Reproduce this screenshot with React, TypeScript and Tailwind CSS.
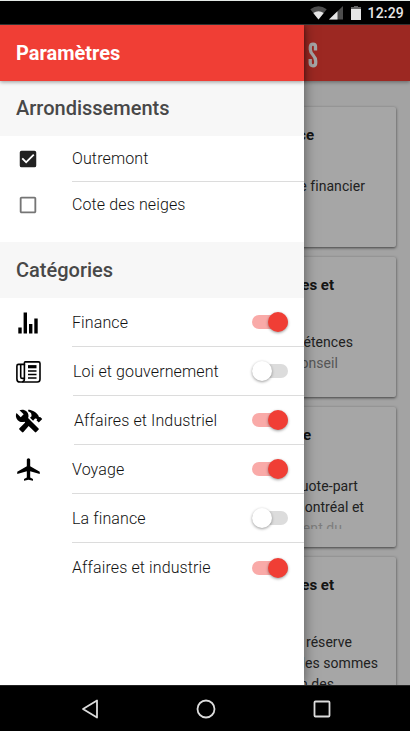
import { useState, type ReactNode } from 'react';
import { IoMdConstruct } from 'react-icons/io';
import { MdCheckBox, MdCheckBoxOutlineBlank, MdLocalAirport } from 'react-icons/md';

type Line = { text: string; end: string; tone?: string };

type Article = { title: Line; gap: string; lines: Line[] };

const ARTICLES: Article[] = [
  {
    title: { text: 'ce', end: 'w-[302px]' },
    gap: 'mt-[31px]',
    lines: [{ text: 'e financier', end: 'w-[353px]' }],
  },
  {
    title: { text: 'es et', end: 'w-[322px]' },
    gap: 'mt-[37px]',
    lines: [
      { text: 'pétences', end: 'w-[341px]' },
      { text: 'conseil', end: 'w-[326px]', tone: 'opacity-60' },
    ],
  },
  {
    title: { text: 'e', end: 'w-[299px]' },
    gap: 'mt-[31px]',
    lines: [
      { text: 'quote-part', end: 'w-[346px]' },
      { text: 'Montréal et', end: 'w-[352px]' },
      {
        text: 'ment du',
        end: 'w-[330px]',
        tone: 'h-[11px] overflow-hidden opacity-30',
      },
    ],
  },
  {
    title: { text: 'es et', end: 'w-[322px]' },
    gap: 'mt-[37px]',
    lines: [
      { text: 'réserve', end: 'w-[340px]' },
      { text: 'les sommes', end: 'w-[366px]' },
      { text: 'n des', end: 'w-[322px]' },
    ],
  },
];

const DISTRICTS = [
  { name: 'Outremont', checked: true },
  { name: 'Cote des neiges', checked: false },
];

function StatsIcon() {
  return (
    <svg width="20" height="22" viewBox="0 0 20 22" className="ml-0.5">
      <path d="M.300 15.500h3.400V21.500H.300zM5.600.500H9v21H5.600zM11 12h3.400v9.500H11zM16.300 6.500h3.400v15h-3.400z" />
    </svg>
  );
}

function NewsIcon() {
  return (
    <svg width="25" height="22" viewBox="0 0 25 22" fill="none" stroke="#000" strokeWidth="1.600">
      <path d="M9.300.900H22.500q1.500 0 1.500 1.500V18.300q0 2.700-2.700 2.700H4q-3.100 0-3.100-3.100V4.900q0-1.500 1.500-1.500h6V1.800q0-.900.900-.900z" />
      <path d="M8.400 3.400v14.400q0 3-2.300 3M4.700 3.400v12.300q0 1.700 1.600 1.700h2" />
      <path d="M12 5.700h8.500" strokeWidth="3.200" />
      <path d="M12 10h8.500M12 13.500h8.500M12 17h8.500" />
    </svg>
  );
}

type Category = {
  name: string;
  icon?: ReactNode;
  on: boolean;
  indent: string;
};

const CATEGORIES: Category[] = [
  { name: 'Finance', icon: <StatsIcon />, on: true, indent: '' },
  { name: 'Loi et gouvernement', icon: <NewsIcon />, on: false, indent: 'ml-px' },
  {
    name: 'Affaires et Industriel',
    icon: <IoMdConstruct size={28} className="-ml-px" />,
    on: true,
    indent: 'ml-0.5',
  },
  { name: 'Voyage', icon: <MdLocalAirport size={27} className="-ml-px" />, on: true, indent: '' },
  { name: 'La finance', on: false, indent: '' },
  { name: 'Affaires et industrie', on: true, indent: '' },
];

function Switch({ on, onClick }: { on: boolean; onClick: () => void }) {
  return (
    <button
      role="switch"
      aria-checked={on}
      onClick={onClick}
      className={`flex h-3.5 w-9 items-center rounded-full ${
        on ? 'justify-end bg-[#f9aaa8]' : 'bg-[#dcdcdc]'
      }`}
    >
      <span
        className={`size-5 rounded-full shadow-[0_1px_3px_rgba(0,0,0,0.4)] ${
          on ? 'bg-[#f03e35]' : 'bg-white'
        }`}
      />
    </button>
  );
}

function StatusBar() {
  return (
    <div className="flex h-[25px] shrink-0 items-center justify-end border-t border-b border-t-[#e4e9e6] border-b-[#333] bg-black pr-[6px] text-[#e6e6e6]">
      <svg width="17" height="14" viewBox="0 0 17 14" className="mr-[2px]">
        <path d="M8.500 13.500.3 3.200Q8.500-2.500 16.700 3.200z" fill="#4d4d4d" />
        <path d="M8.500 13.500 3.300 7Q8.500 3.500 13.700 7z" fill="currentColor" />
      </svg>
      <svg width="14" height="14" viewBox="0 0 14 14" className="mr-[8px]">
        <path d="M0 13.500 14 0v13.500z" fill="#4d4d4d" />
        <path d="M0 13.500 8.500 5.300v8.200z" fill="currentColor" />
      </svg>
      <svg width="10" height="14" viewBox="0 0 10 14" className="mr-[6px]">
        <path d="M0 1h3V0h4v1h3v3H0z" fill="#666" />
        <path d="M0 3h10v11H0z" fill="currentColor" />
      </svg>
      <span className="pt-0.5 text-[14px] font-medium tracking-[0.2px]">12:29</span>
    </div>
  );
}

function ArticleCard({ article }: { article: Article }) {
  return (
    <div className="h-[140px] shrink-0 rounded-[2px] bg-white pt-[18px] text-right shadow-[0_1px_3px_rgba(0,0,0,0.6)]">
      <h3 className={`text-[15px] leading-5 font-bold text-[#212121] ${article.title.end}`}>
        {article.title.text}
      </h3>
      <div className={article.gap}>
        {article.lines.map((line) => (
          <p
            key={line.text}
            className={`text-[14px] leading-[21px] tracking-[0.05px] text-[#333] ${line.end} ${line.tone ?? ''}`}
          >
            {line.text}
          </p>
        ))}
      </div>
    </div>
  );
}

function SectionTitle({ children }: { children: ReactNode }) {
  return (
    <h2 className="flex h-14 items-center bg-[#f7f7f7] pl-4 text-[20px] font-medium text-[#484848]">
      {children}
    </h2>
  );
}

export default function App() {
  const [districts, setDistricts] = useState(DISTRICTS);
  const [categories, setCategories] = useState(CATEGORIES);

  const toggleDistrict = (index: number) =>
    setDistricts((list) => list.map((d, i) => (i === index ? { ...d, checked: !d.checked } : d)));

  const toggleCategory = (index: number) =>
    setCategories((list) => list.map((c, i) => (i === index ? { ...c, on: !c.on } : c)));

  return (
    <div className="flex h-[731px] w-[410px] flex-col overflow-hidden bg-black font-[Roboto,sans-serif]">
      <StatusBar />

      <div className="relative h-[660px] overflow-hidden bg-[#fafafa]">
        {/* News feed behind the drawer */}
        <header className="flex h-14 items-center bg-[#f03e35] pl-[308px] text-white shadow-[0_1px_4px_rgba(0,0,0,0.4)]">
          <svg width="10" height="26" viewBox="0 0 10 26" fill="none" stroke="#fff" className="mt-1">
            <path
              d="M7.500 8.500V4.500Q7.500 2.200 5 2.200T2.300 5v2.500Q2.300 10 5 13t2.700 6v2q0 2.800-2.700 2.800T2.200 21v-4"
              strokeWidth="3.300"
            />
          </svg>
        </header>
        <main className="flex flex-col gap-2.5 pt-[26px] pr-[14px] pl-3">
          {ARTICLES.map((article, i) => (
            <ArticleCard key={i} article={article} />
          ))}
        </main>

        <div className="absolute inset-0 bg-black/35" />

        {/* Drawer */}
        <aside className="absolute inset-y-0 left-0 w-[304px] bg-white shadow-[0_0_12px_rgba(0,0,0,0.5)]">
          <h1 className="relative flex h-14 items-center bg-[#f03e35] pl-4 text-[20px] font-bold text-white shadow-[0_1px_4px_rgba(0,0,0,0.4)]">
            Paramètres
          </h1>

          <div className="-mt-px">
            <SectionTitle>Arrondissements</SectionTitle>
          </div>
          <ul className="pb-[14px]">
            {districts.map((district, i) => (
              <li key={district.name} className="flex h-[46px] items-center pl-4">
                <button onClick={() => toggleDistrict(i)} className="w-14">
                  {district.checked ? (
                    <MdCheckBox size={22} className="ml-px text-[#212121]" />
                  ) : (
                    <MdCheckBoxOutlineBlank size={22} className="ml-px text-[#757575]" />
                  )}
                </button>
                <span
                  className={`flex h-full flex-1 items-center text-[16px] font-light tracking-[0.12px] text-[#111] ${
                    i < districts.length - 1 ? 'border-b border-[#dcdcdc]' : ''
                  }`}
                >
                  {district.name}
                </span>
              </li>
            ))}
          </ul>

          <SectionTitle>Catégories</SectionTitle>
          <ul>
            {categories.map((category, i) => (
              <li key={category.name} className="flex h-[49px] items-center pl-4">
                <div className="w-14">{category.icon}</div>
                <div
                  className={`flex h-full flex-1 items-center justify-between pr-4 text-[16px] font-light tracking-[0.12px] text-[#111] ${
                    category.indent
                  } ${i < categories.length - 1 ? 'border-b border-[#dcdcdc]' : ''}`}
                >
                  <span className={i < categories.length - 1 ? 'pt-0.5' : ''}>
                    {category.name}
                  </span>
                  <Switch on={category.on} onClick={() => toggleCategory(i)} />
                </div>
              </li>
            ))}
          </ul>
        </aside>
      </div>

      {/* System navigation */}
      <nav className="flex h-[46px] shrink-0 items-center border-t border-[#222] pl-[81px] text-[#dcdcdc]">
        <svg width="18" height="20" viewBox="0 0 18 20" fill="none" stroke="currentColor" strokeWidth="1.800">
          <path d="M16 1.500v17L2 10z" strokeLinejoin="round" />
        </svg>
        <svg width="20" height="20" viewBox="0 0 20 20" fill="none" stroke="currentColor" strokeWidth="1.800" className="ml-[97px]">
          <circle cx="10" cy="10" r="8.500" />
        </svg>
        <svg width="18" height="18" viewBox="0 0 18 18" fill="none" stroke="currentColor" strokeWidth="1.800" className="ml-[97px]">
          <rect x="1.500" y="1.500" width="15" height="15" rx="1" />
        </svg>
      </nav>
    </div>
  );
}
